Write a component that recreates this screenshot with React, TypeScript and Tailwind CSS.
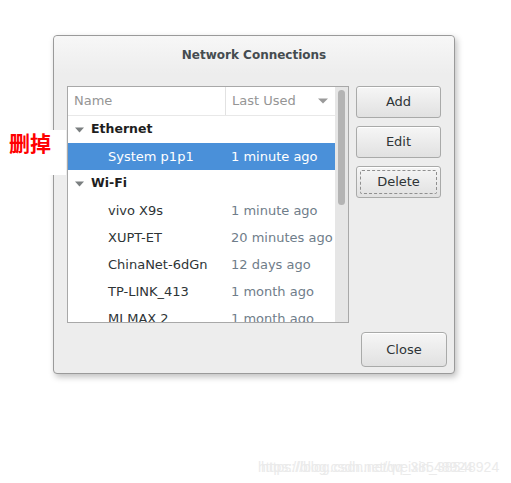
import React from "react";

const font = { fontFamily: '"DejaVu Sans", "Liberation Sans", sans-serif' };

type Row = { name: string; when: string; selected?: boolean };

const wifi: Row[] = [
  { name: "vivo X9s", when: "1 minute ago" },
  { name: "XUPT-ET", when: "20 minutes ago" },
  { name: "ChinaNet-6dGn", when: "12 days ago" },
  { name: "TP-LINK_413", when: "1 month ago" },
  { name: "MI MAX 2", when: "1 month ago" },
];

function Expander() {
  return (
    <svg width="9" height="6" viewBox="0 0 9 6" className="shrink-0">
      <path d="M0 0.5 H9 L4.5 5.5 Z" fill="#7b7f80" />
    </svg>
  );
}

function GroupRow({ label }: { label: string }) {
  return (
    <div className="flex h-[27px] shrink-0 items-center gap-[7px] pl-[7px] text-[12.5px] font-bold text-[#1e1e1e]">
      <Expander />
      <span>{label}</span>
    </div>
  );
}

function ItemRow({ row }: { row: Row }) {
  return (
    <div
      className={
        row.selected
          ? "flex h-[27px] shrink-0 items-center bg-[#4a90d9] text-[13px] text-white"
          : "flex h-[27px] shrink-0 items-center text-[13px] text-[#2e3436]"
      }
    >
      <span className="w-[158px] pl-[40px]">{row.name}</span>
      <span className={row.selected ? "pl-[5px] text-white" : "pl-[5px] text-[#6f7d8a]"}>
        {row.when}
      </span>
    </div>
  );
}

function Button({ label, focused }: { label: string; focused?: boolean }) {
  return (
    <div className="flex h-[32px] w-[85px] items-center justify-center rounded-[3px] border border-[#a9aaa9] bg-gradient-to-b from-[#f6f6f6] to-[#e1e1e1] p-[3px] text-[13px] text-[#2e3436] shadow-[inset_0_1px_0_#ffffff]">
      <div
        className={
          focused
            ? "flex h-full w-full items-center justify-center rounded-[2px] border border-dashed border-[#8f8f8f]"
            : "flex h-full w-full items-center justify-center"
        }
      >
        {label}
      </div>
    </div>
  );
}

export default function App() {
  return (
    <div className="relative h-[483px] w-[511px] overflow-hidden bg-white" style={font}>
      <div className="ml-[53px] mt-[35px] flex h-[339px] w-[402px] flex-col rounded-[4px] border border-[#9a9a9a] bg-[#ededed] shadow-[2px_3px_6px_rgba(0,0,0,0.25)]">
        <div className="flex h-[38px] shrink-0 items-center justify-center rounded-t-[4px] bg-gradient-to-b from-[#f7f7f7] to-[#ededed] text-[12px] font-bold text-[#454c50]">
          Network Connections
        </div>

        <div className="flex gap-[7px] pl-[13px] pt-[12px]">
          <div className="flex h-[237px] w-[282px] overflow-hidden border border-[#a8a8a8] bg-white">
            <div className="flex min-w-0 flex-1 flex-col">
              <div className="flex h-[29px] shrink-0 items-center border-b border-[#e8e8e8] text-[13px] text-[#959595]">
                <span className="flex h-full w-[158px] items-center border-r border-[#e2e2e2] pl-[6px]">
                  Name
                </span>
                <span className="flex flex-1 items-center justify-between pl-[6px] pr-[7px]">
                  Last Used
                  <svg width="10" height="6" viewBox="0 0 10 6">
                    <path d="M0 0.5 H10 L5 5.5 Z" fill="#9a9a9a" />
                  </svg>
                </span>
              </div>
              <GroupRow label="Ethernet" />
              <ItemRow row={{ name: "System p1p1", when: "1 minute ago", selected: true }} />
              <GroupRow label="Wi-Fi" />
              {wifi.map((row) => (
                <ItemRow key={row.name} row={row} />
              ))}
            </div>
            <div className="flex w-[13px] shrink-0 justify-center bg-[#e6e6e6] pt-[3px]">
              <div className="h-[115px] w-[7px] rounded-full bg-[#b4b4b4]" />
            </div>
          </div>

          <div className="flex flex-col gap-[8px]">
            <Button label="Add" />
            <Button label="Edit" />
            <Button label="Delete" focused />
          </div>
        </div>

        <div className="flex justify-end pr-[7px] pt-[9px]">
          <div className="flex h-[35px] w-[86px] items-center justify-center rounded-[4px] border border-[#a9aaa9] bg-gradient-to-b from-[#f6f6f6] to-[#e1e1e1] text-[13px] text-[#2e3436] shadow-[inset_0_1px_0_#ffffff]">
            Close
          </div>
        </div>
      </div>

      {/* annotation overlay */}
      <div
        className="absolute left-0 top-[130px] h-[45px] w-[66px] bg-white pl-[9px] text-[21px] font-bold leading-[24px] text-[#ff0000]"
        style={{ fontFamily: '"Noto Sans CJK SC", sans-serif' }}
      >
        删掉
      </div>

      {/* watermark */}
      <div
        className="absolute left-[258px] top-[457px] text-[14px] text-[#ebebeb]"
        style={{ fontFamily: '"Liberation Sans", sans-serif' }}
      >
        <span className="absolute left-0 top-0 whitespace-nowrap">https://blog.csdn.net/qq_38548924</span>
        <span className="whitespace-nowrap pl-[3px]">https://blog.csdn.net/weixin_38548924</span>
      </div>
    </div>
  );
}
